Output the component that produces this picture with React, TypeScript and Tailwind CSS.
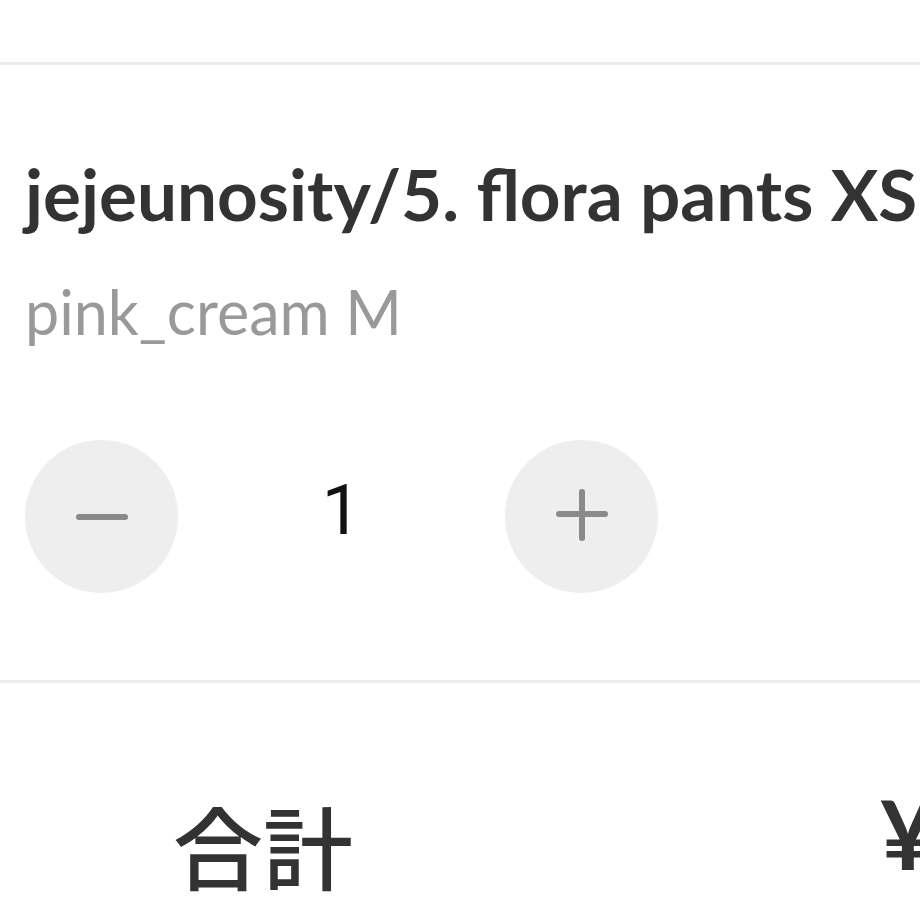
import React from 'react';

const Minus = () => (
  <span className="block w-[52px] h-[6px] rounded-full bg-[#8a8a8a]" />
);

const Plus = () => (
  <svg width="54" height="54" viewBox="0 0 54 54" className="-mt-[4px]">
    <rect x="1" y="23" width="52" height="6" rx="3" fill="#8a8a8a" />
    <rect x="24" y="1" width="6" height="52" rx="3" fill="#8a8a8a" />
  </svg>
);

const CartItem: React.FC = () => {
  return (
    <div className="pl-[25px] pt-[86px] pb-[87px]">
      <h2 className="text-[71px] leading-[1.2] font-bold text-[#333] whitespace-nowrap">
        jejeunosity/5. flora pants XS
      </h2>
      <p className="mt-[39px] text-[61px] leading-[1.2] text-[#999] whitespace-nowrap">pink_cream M</p>
      <div className="mt-[92px] flex items-center">
        <button className="w-[153px] h-[153px] rounded-full bg-[#eeeeee] flex items-center justify-center">
          <Minus />
        </button>
        <span
          className="w-[327px] -mt-[14px] text-center text-[70px] leading-none text-[#111]"
          style={{ fontFamily: 'Roboto, sans-serif' }}
        >
          1
        </span>
        <button className="w-[153px] h-[153px] rounded-full bg-[#eeeeee] flex items-center justify-center">
          <Plus />
        </button>
      </div>
    </div>
  );
};

export default function App() {
  return (
    <div
      className="w-[920px] h-[920px] overflow-hidden bg-white"
      style={{ fontFamily: 'Lato, "Noto Sans CJK JP", sans-serif' }}
    >
      <div className="h-[62px]" />
      <div className="h-[3px] bg-[#ebebeb]" />
      <CartItem />
      <div className="h-[3px] bg-[#ebebeb]" />
      <div className="flex items-start justify-between pt-[116px]">
        <span
          className="pl-[173px] text-[90px] leading-none font-medium text-[#333] whitespace-nowrap"
          style={{ fontFamily: '"Noto Sans CJK JP", sans-serif' }}
        >
          合計
        </span>
        <span className="w-[40px] mt-[-14px] text-[96px] leading-none font-bold text-[#333] whitespace-nowrap">
          ¥
        </span>
      </div>
    </div>
  );
}
